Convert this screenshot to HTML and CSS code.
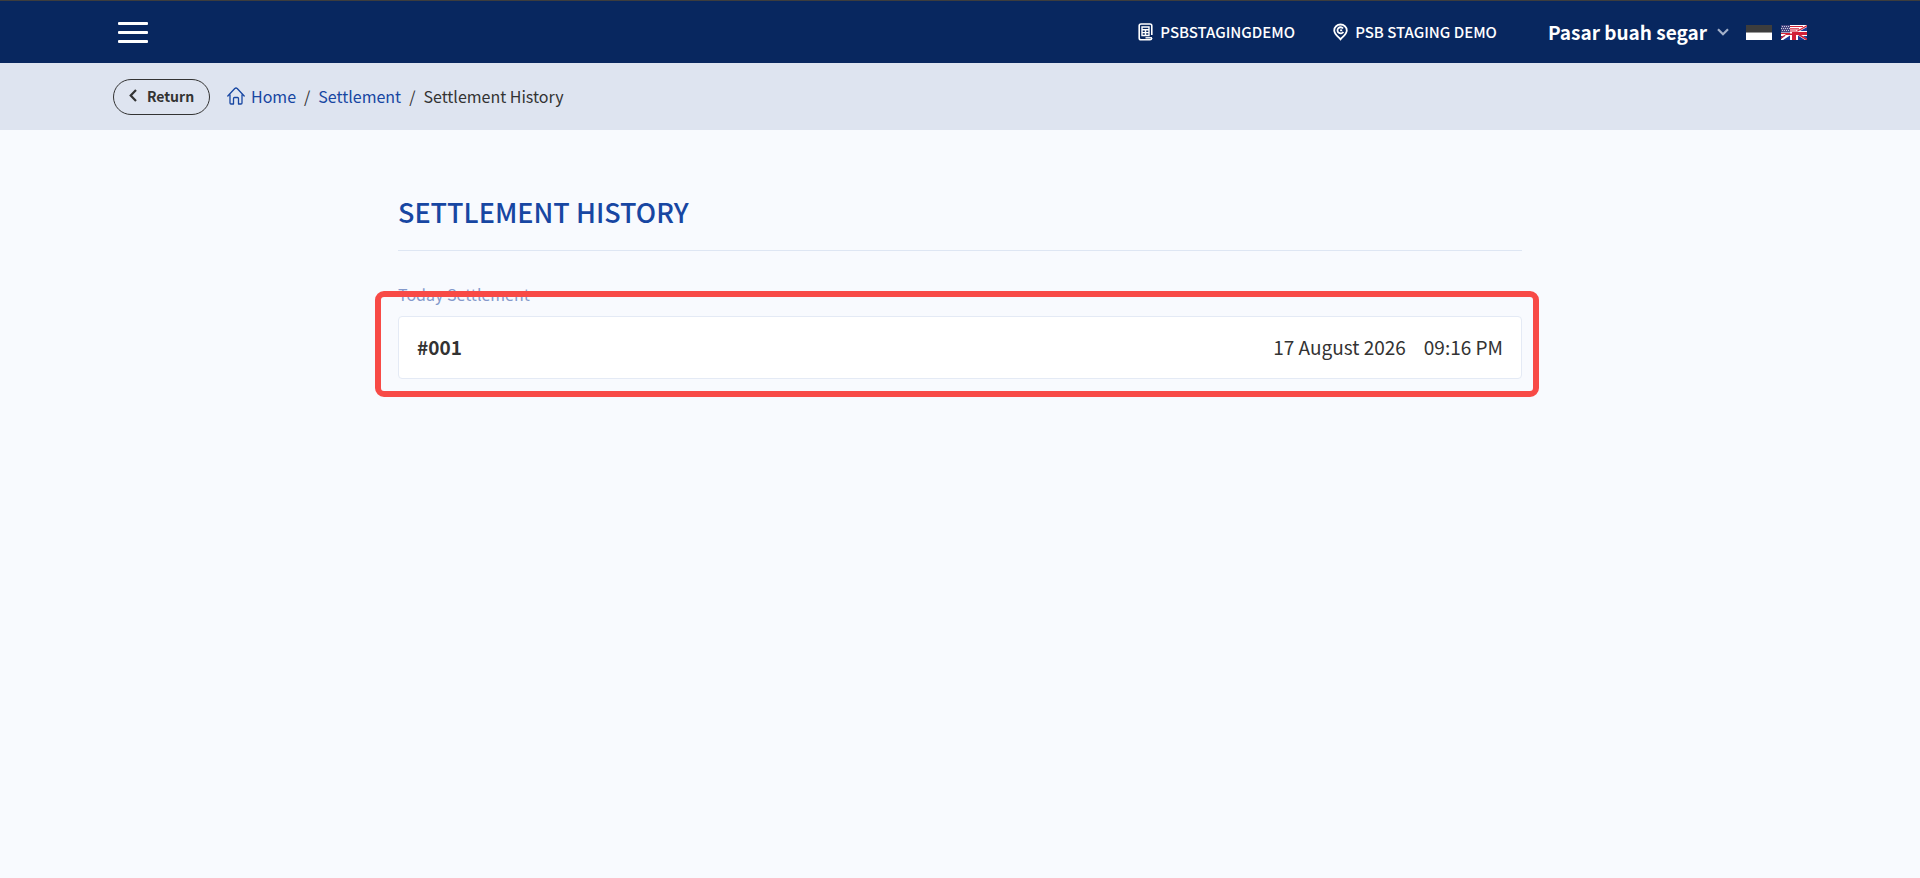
FILE: index.html
```html
<!DOCTYPE html>
<html lang="en">
<head>
<meta charset="utf-8">
<title>Settlement History</title>
<link rel="stylesheet" href="styles.css">
</head>
<body>
<header class="topbar">
  <button class="menu" type="button" aria-label="Menu"><span class="bar"></span><span class="bar"></span><span class="bar"></span></button>
  <div class="store">
    <span class="tag"><svg class="icon" width="15" height="18" viewBox="0 0 15 18" fill="none" stroke="currentColor"><path stroke-width="1.600" d="M13.800 12V2.800Q13.800 1 12 1H3Q1.200 1 1.200 2.800V15Q1.200 16.800 3 16.800H12Q13.600 16.800 13.800 15"/><path stroke-width="1.400" d="M4 4H11V12.500H4ZM4 6.800H11M4 9.600H11M7.500 6.800V12.500"/><path stroke-width="1.400" d="M7.500 14.800H14"/></svg>PSBSTAGINGDEMO</span>
    <span class="tag"><svg class="icon" width="15" height="18" viewBox="0 0 16 18" fill="none" stroke="currentColor" stroke-width="1.900"><path d="M8 16.800C5.500 14 1.300 11 1.300 7.300A6.700 6.300 0 0 1 14.700 7.300C14.700 11 10.500 14 8 16.800Z"/><path d="M10.700 5.200A3.300 3.300 0 1 0 11 8.800"/><path d="M9.800 7.200H7.600"/></svg>PSB STAGING DEMO</span>
  </div>
  <button class="account" type="button">Pasar buah segar<svg width="12" height="8" viewBox="0 0 12 8" fill="none" stroke="#a3b0c9" stroke-width="2.200"><path d="M1 1.200L6 6.200L11 1.200"/></svg></button>
  <div class="langs">
    <button class="lang" type="button" aria-label="Bahasa"><svg width="26" height="15" viewBox="0 0 26 15"><path fill="#3d3d3d" d="M0 0H26V7H0Z"/><path fill="#999" d="M0 7H26V8H0Z"/><path fill="#fff" d="M0 8H26V15H0Z"/></svg></button>
    <button class="lang" type="button" aria-label="English"><svg width="26" height="15" viewBox="0 0 26 15"><path fill="#fff" d="M0 0H26V15H0Z"/><path stroke="#d22238" stroke-width="1.200" d="M9 1.500H22M9 3.800H18M9 6H15M0 8.500H9"/><path fill="#1c3a94" d="M26 2V6H19ZM2 15L9 10.500V15ZM17 15V10.500L24 15ZM0 11V14L4 11ZM26 11V14L22 11Z"/><path fill="#45457f" d="M0 0H9V7.500H0Z"/><path stroke="#c9c9dd" stroke-width="1" stroke-dasharray="1 1" d="M1 1.500H9M0 3.500H9M1 5.500H9"/><path fill="#d22238" d="M11 7H26V10H15V15H11V10H5L0 14V12L6 8.500H11ZM26 0V1.500L17 6.500H14.500ZM17 10H20L26 13.500V15H25Z"/></svg></button>
  </div>
</header>
<nav class="crumbbar" aria-label="Breadcrumb">
  <button class="return" type="button"><svg width="8" height="13" viewBox="0 0 8 13" fill="none" stroke="currentColor" stroke-width="2.200"><path d="M7 1L1.700 6.500L7 12"/></svg>Return</button>
  <div class="crumbs">
    <a class="home" href="#"><svg width="18" height="18" viewBox="0 0 18 18" fill="none" stroke="currentColor" stroke-width="1.300" stroke-linecap="round" stroke-linejoin="round"><path d="M.8 9L7.800 1.500Q9 .5 10.200 1.500L17.200 9M3 7.500V16Q3 17 4 17H6.500V11.500Q6.500 10.500 7.500 10.500H10.500Q11.500 10.500 11.500 11.500V17H14Q15 17 15 16V7.500"/></svg>Home</a>
    <span>/</span>
    <a href="#">Settlement</a>
    <span>/</span>
    <span>Settlement History</span>
  </div>
</nav>
<main class="content">
  <h1 class="title">SETTLEMENT HISTORY</h1>
  <h2 class="group">Today Settlement</h2>
  <div class="highlighted">
    <a class="entry" href="#"><strong class="number">#001</strong><span>17 August 2026</span><span>09:16 PM</span></a>
    <div class="highlight"></div>
  </div>
</main>
</body>
</html>
```
FILE: styles.css
```css
* {
  box-sizing: border-box;
}

body {
  margin: 0;
  min-height: 100vh;
  background: #f8fafe;
  color: #333;
  font: 16px/24px "Noto Sans CJK SC", "Open Sans", sans-serif;
}

button {
  padding: 0;
  border: 0;
  background: none;
  color: inherit;
  font: inherit;
  cursor: pointer;
}

a {
  color: #1746a2;
  text-decoration: none;
}

.topbar {
  display: flex;
  align-items: center;
  height: 63px;
  padding: 0 113px 0 118px;
  border-top: 1px solid #3d3d3d;
  background: #08275f;
  color: #fff;
}

.menu {
  display: flex;
  flex-direction: column;
  gap: 6px;
  width: 30px;
}

.bar {
  height: 3px;
  border-radius: 1px;
  background: #fff;
}

.store {
  display: flex;
  gap: 38px;
  margin-left: auto;
}

.tag {
  display: flex;
  align-items: center;
  gap: 7px;
  font-size: 15px;
  font-weight: 500;
}

.account {
  display: flex;
  align-items: center;
  gap: 10px;
  margin-left: 51px;
  font-size: 19px;
  font-weight: 700;
}

.langs {
  display: flex;
  gap: 9px;
  margin-left: 17px;
}

.lang,
.lang svg {
  display: block;
}

.crumbbar {
  display: flex;
  align-items: center;
  gap: 17px;
  height: 67px;
  padding: 0 113px;
  background: #dee4f0;
}

.return {
  display: flex;
  align-items: center;
  justify-content: center;
  gap: 10px;
  width: 97px;
  height: 36px;
  padding-bottom: 2px;
  border: 1px solid #333;
  border-radius: 18px;
  font-size: 14px;
  font-weight: 700;
}

.crumbs,
.home {
  display: flex;
  align-items: center;
}

.crumbs {
  gap: 8px;
  padding-bottom: 2px;
}

.home {
  gap: 6px;
}

.content {
  max-width: 1124px;
  margin: 0 auto;
  padding-top: 62px;
}

.title {
  margin: 0;
  padding-bottom: 18px;
  border-bottom: 1px solid #dee6f3;
  color: #1746a2;
  font-size: 27px;
  line-height: 40px;
  font-weight: 500;
}

.group {
  margin: 31px 0 10px;
  color: #8499cb;
  font-size: 16px;
  font-weight: 400;
}

.highlighted {
  position: relative;
}

.entry {
  display: flex;
  align-items: center;
  gap: 18px;
  padding: 16px 18px 17px;
  border: 1px solid #e4eaf5;
  border-radius: 4px;
  background: #fff;
  color: #333;
  font-size: 19px;
  line-height: 28px;
}

.number {
  margin-right: auto;
  font-weight: 700;
}

.highlight {
  position: absolute;
  inset: -25px -17px -18px -23px;
  border: 6px solid #f84a46;
  border-radius: 9px;
  pointer-events: none;
}
```
